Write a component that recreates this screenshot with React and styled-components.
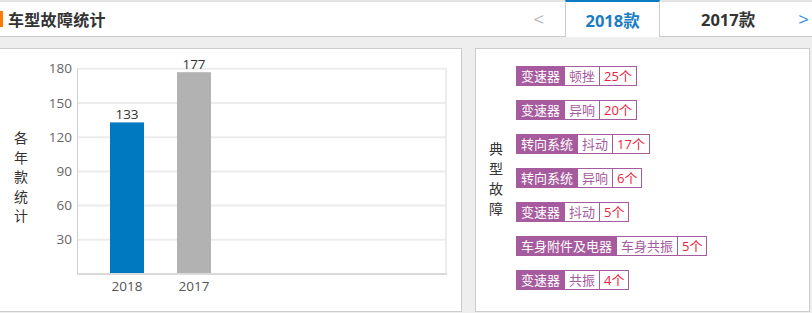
import React from "react";
import styled, { createGlobalStyle } from "styled-components";

const GlobalStyle = createGlobalStyle`
  * { box-sizing: border-box; }
  body {
    margin: 0;
    background: #eeeeee;
    font-family: "Open Sans", "Noto Sans CJK SC", sans-serif;
    color: #333;
    overflow: hidden;
  }
`;

const Header = styled.div`
  height: 37px;
  background: #fff;
  border-top: 2px solid #e3e3e3;
  border-bottom: 1px solid #cccccc;
  display: flex;
  justify-content: space-between;
`;

const Title = styled.h2`
  margin: 0;
  align-self: center;
  display: flex;
  align-items: center;
  gap: 5px;
  font-size: 16px;
  font-weight: bold;
  letter-spacing: 0.3px;
  font-family: "Noto Sans CJK SC", sans-serif;
  color: #333;
  line-height: 20px;

  &::before {
    content: "";
    width: 3px;
    height: 16px;
    background: #ff7a00;
  }
`;

const Nav = styled.div`
  display: flex;
  align-items: stretch;
`;

const Arrow = styled.span`
  display: flex;
  align-items: center;
  font-size: 19px;
  color: ${(p) => (p.active ? "#2b8ed8" : "#b5b5b5")};
  padding: ${(p) => (p.right ? "0 3px 0 2px" : "0 21px 0 0")};
`;

const Tab = styled.div`
  display: flex;
  align-items: center;
  justify-content: center;
  width: ${(p) => p.w}px;
  font-size: 16.5px;
  font-weight: bold;
  font-family: "Open Sans", "Noto Sans CJK SC", sans-serif;
  color: ${(p) => (p.active ? "#1a7cc3" : "#333")};
  background: #fff;
  ${(p) =>
    p.active &&
    `
    margin-top: -2px;
    margin-bottom: -1px;
    border-top: 2px solid #0a7bc1;
    border-left: 1px solid #cccccc;
    border-right: 1px solid #cccccc;
  `}
`;

const Main = styled.div`
  display: flex;
  gap: 13px;
  padding-top: 11px;
`;

const Panel = styled.div`
  width: ${(p) => p.w}px;
  height: 264px;
  margin-left: ${(p) => p.ml || 0}px;
  background: #fff;
  border: 1px solid #cccccc;
  display: flex;
`;

const VTitle = styled.div`
  width: ${(p) => p.w}px;
  flex-shrink: 0;
  padding-top: ${(p) => p.top}px;
  display: flex;
  flex-direction: column;
  align-items: center;
  font-family: "Noto Sans CJK SC", sans-serif;
  font-size: 14px;
  line-height: ${(p) => p.lh}px;
  color: #333;
`;

const TagList = styled.div`
  display: flex;
  flex-direction: column;
  align-items: flex-start;
  gap: 14px;
  padding-top: 17px;
`;

const Tag = styled.div`
  display: flex;
  height: 20px;
  border: 1px solid #a65b9e;
  font-family: "Open Sans", "Noto Sans CJK SC", sans-serif;
  font-size: 13px;
  line-height: 18px;
`;

const Seg = styled.span`
  padding: 0 4px;
  color: ${(p) => (p.kind === "part" ? "#fff" : p.kind === "count" ? "#f0203a" : "#a65b9e")};
  background: ${(p) => (p.kind === "part" ? "#a65b9e" : "#fff")};
  & + & {
    border-left: 1px solid #a65b9e;
  }
`;

const faults = [
  ["变速器", "顿挫", 25],
  ["变速器", "异响", 20],
  ["转向系统", "抖动", 17],
  ["转向系统", "异响", 6],
  ["变速器", "抖动", 5],
  ["车身附件及电器", "车身共振", 5],
  ["变速器", "共振", 4],
];

const bars = [
  { year: "2018", value: 133, color: "#0079c1" },
  { year: "2017", value: 177, color: "#b2b2b2" },
];

const base = 274;
const scale = 34.2 / 30;

function Chart() {
  const ticks = [180, 150, 120, 90, 60, 30];
  return (
    <svg width="419" height="262" style={{ display: "block" }}>
      <g transform="translate(-42,-49)" fontFamily="'Open Sans', sans-serif" fontSize="13.5">
        {ticks.map((t) => {
          const y = base - t * scale;
          return (
            <g key={t}>
              <line x1="77" x2="447" y1={y} y2={y} stroke="#ececec" strokeWidth="2" />
              <text x="72" y={y + 4.5} textAnchor="end" fill="#666">
                {t}
              </text>
            </g>
          );
        })}
        <line x1="446" x2="446" y1={base - 180 * scale} y2={base} stroke="#ececec" strokeWidth="2" />
        <line x1="77.5" x2="77.5" y1={base - 180 * scale} y2={base} stroke="#cfcfcf" strokeWidth="1" />
        <line x1="77" x2="447" y1={base} y2={base} stroke="#dadada" strokeWidth="2" />
        {bars.map((b, i) => {
          const x = 110 + i * 67;
          const top = base - b.value * scale;
          return (
            <g key={b.year}>
              <rect x={x} y={top} width="34" height={base - top - 1} fill={b.color} />
              <text x={x + 17} y={top - 3} textAnchor="middle" fill="#333">
                {b.value}
              </text>
              <text x={x + 17} y="291" textAnchor="middle" fill="#555">
                {b.year}
              </text>
            </g>
          );
        })}
      </g>
    </svg>
  );
}

export default function App() {
  return (
    <>
      <GlobalStyle />
      <Header>
        <Title>车型故障统计</Title>
        <Nav>
          <Arrow>&lt;</Arrow>
          <Tab w={95} active>
            2018款
          </Tab>
          <Tab w={136}>2017款</Tab>
          <Arrow right active>
            &gt;
          </Arrow>
        </Nav>
      </Header>
      <Main>
        <Panel w={463} ml={-1}>
          <VTitle w={42} top={79} lh={19.5}>
            {"各年款统计".split("").map((c, i) => (
              <span key={i}>{c}</span>
            ))}
          </VTitle>
          <Chart />
        </Panel>
        <Panel w={335}>
          <VTitle w={40} top={89} lh={20}>
            {"典型故障".split("").map((c, i) => (
              <span key={i}>{c}</span>
            ))}
          </VTitle>
          <TagList>
            {faults.map(([part, issue, n], i) => (
              <Tag key={i}>
                <Seg kind="part">{part}</Seg>
                <Seg kind="issue">{issue}</Seg>
                <Seg kind="count">{n}个</Seg>
              </Tag>
            ))}
          </TagList>
        </Panel>
      </Main>
    </>
  );
}
